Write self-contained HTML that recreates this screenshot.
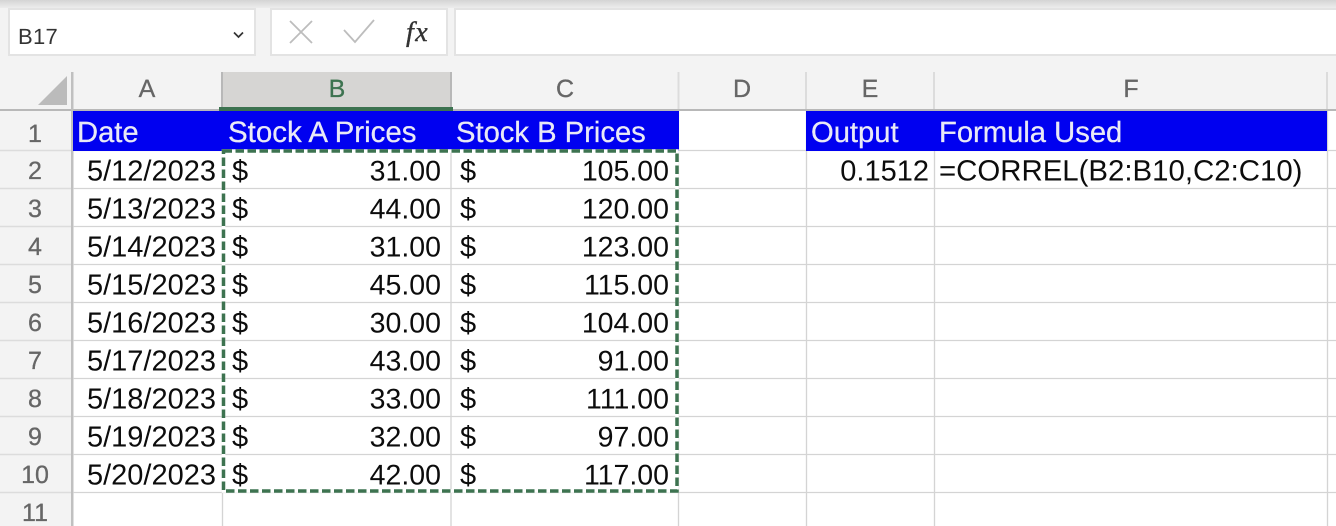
<!DOCTYPE html>
<html><head><meta charset="utf-8"><style>
html,body{margin:0;padding:0;background:#fff;width:1336px;height:526px;overflow:hidden}
svg{display:block}
text{font-family:"Liberation Sans",sans-serif;font-size:29px;fill:#0c0c0c;text-rendering:geometricPrecision}
.h{fill:#e9e9f6;font-size:29.2px;stroke:#e9e9f6;stroke-width:.25px}
.c{fill:#666;font-size:25px;text-anchor:middle;stroke:#666;stroke-width:.3px}
.r{text-anchor:end}
.n{font-size:28.5px}
</style></head><body>
<svg width="1336" height="526" viewBox="0 0 1336 526" xmlns="http://www.w3.org/2000/svg">
<defs><linearGradient id="g" x1="0" y1="0" x2="0" y2="1"><stop offset="0" stop-color="#d4d4d4"/><stop offset="1" stop-color="#ededed"/></linearGradient></defs>
<rect width="1336" height="526" fill="#fff"/>
<!-- toolbar -->
<rect width="1336" height="111" fill="#f3f3f3"/>
<rect width="1336" height="8" fill="url(#g)"/>
<rect x="9" y="9" width="246" height="46" fill="#fff" stroke="#e3e3e3" stroke-width="2"/>
<text x="18" y="44" style="font-size:22px;letter-spacing:.3px;fill:#333">B17</text>
<path d="M234 32.500l4.500 4.500 4.500-4.500" fill="none" stroke="#333" stroke-width="1.700"/>
<rect x="271" y="9" width="176" height="46" fill="#fff" stroke="#e3e3e3" stroke-width="2"/>
<path d="M290 21l22 22M312 21l-22 22" stroke="#bdbdbd" stroke-width="1.800" fill="none"/>
<path d="M344 30l11 12 19-22" stroke="#bdbdbd" stroke-width="1.800" fill="none"/>
<text x="406" y="41" style="font-family:'Liberation Serif',serif;font-style:italic;font-size:28px;letter-spacing:1.500px;fill:#333;stroke:#333;stroke-width:.4px">fx</text>
<rect x="455" y="9" width="890" height="46" fill="#fff" stroke="#e3e3e3" stroke-width="2"/>
<!-- column headers -->
<rect x="222" y="72" width="229" height="36" fill="#d6d5d3"/>
<path d="M806 72v38M934 72v38M1327 72v38M678.500 72v38" stroke="#dcdcdc" stroke-width="2" fill="none"/>
<path d="M222 72v36M451 72v36" stroke="#b8b8b8" stroke-width="2" fill="none"/>
<path d="M38 105L67 76V105Z" fill="#bbb"/>
<rect x="0" y="109" width="1336" height="2" fill="#b8b8b8"/>
<rect x="71" y="72" width="2.500" height="454" fill="#c0c0c0"/>
<rect x="219" y="107" width="234" height="4" fill="#3d7350"/>
<text class="c" x="147" y="97">A</text>
<text class="c" x="337" y="97" style="fill:#3d7350;stroke:#3d7350">B</text>
<text class="c" x="565" y="97">C</text>
<text class="c" x="742" y="97">D</text>
<text class="c" x="870" y="97">E</text>
<text class="c" x="1131" y="97">F</text>
<!-- row header -->
<rect x="0" y="111" width="71" height="415" fill="#f3f3f3"/>
<path d="M0 150.500H71M0 188.500H71M0 226.500H71M0 264.500H71M0 302.500H71M0 340.500H71M0 378.500H71M0 416.500H71M0 454.500H71M0 492.500H71" stroke="#dcdcdc" stroke-width="1.500" fill="none"/>
<text class="c" x="35" y="142">1</text><text class="c" x="35" y="179">2</text><text class="c" x="35" y="217">3</text><text class="c" x="35" y="255">4</text><text class="c" x="35" y="293">5</text><text class="c" x="35" y="331">6</text><text class="c" x="35" y="369">7</text><text class="c" x="35" y="407">8</text><text class="c" x="35" y="445">9</text><text class="c" x="35" y="483">10</text><text class="c" x="35" y="521">11</text>
<!-- grid -->
<path d="M73 150.500H1336M73 188.500H1336M73 226.500H1336M73 264.500H1336M73 302.500H1336M73 340.500H1336M73 378.500H1336M73 416.500H1336M73 454.500H1336M73 492.500H1336M222.500 111V526M451 111V526M678.500 111V526M806.500 111V526M934.500 111V526M1327.500 111V526" stroke="#d4d4d4" stroke-width="1.300" fill="none"/>
<!-- blue headers -->
<rect x="73" y="111" width="606" height="40" fill="#0000f0"/>
<rect x="806" y="111" width="521" height="40" fill="#0000f0"/>
<text class="h" x="77" y="142">Date</text>
<text class="h" x="228" y="142" style="font-size:29.5px">Stock A Prices</text>
<text class="h" x="456" y="142" style="font-size:29.2px">Stock B Prices</text>
<text class="h" x="811" y="142">Output</text>
<text class="h" x="939" y="142">Formula Used</text>
<!-- dates -->
<text class="r" x="216" y="180.500">5/12/2023</text>
<text class="r" x="216" y="218.500">5/13/2023</text>
<text class="r" x="216" y="256.500">5/14/2023</text>
<text class="r" x="216" y="294.500">5/15/2023</text>
<text class="r" x="216" y="332.500">5/16/2023</text>
<text class="r" x="216" y="370.500">5/17/2023</text>
<text class="r" x="216" y="408.500">5/18/2023</text>
<text class="r" x="216" y="446.500">5/19/2023</text>
<text class="r" x="216" y="484.500">5/20/2023</text>
<text class="r n" x="441" y="180.500">31.00</text>
<text class="r n" x="441" y="218.500">44.00</text>
<text class="r n" x="441" y="256.500">31.00</text>
<text class="r n" x="441" y="294.500">45.00</text>
<text class="r n" x="441" y="332.500">30.00</text>
<text class="r n" x="441" y="370.500">43.00</text>
<text class="r n" x="441" y="408.500">33.00</text>
<text class="r n" x="441" y="446.500">32.00</text>
<text class="r n" x="441" y="484.500">42.00</text>
<text class="r n" x="669" y="180.500">105.00</text>
<text class="r n" x="669" y="218.500">120.00</text>
<text class="r n" x="669" y="256.500">123.00</text>
<text class="r n" x="669" y="294.500">115.00</text>
<text class="r n" x="669" y="332.500">104.00</text>
<text class="r n" x="669" y="370.500">91.00</text>
<text class="r n" x="669" y="408.500">111.00</text>
<text class="r n" x="669" y="446.500">97.00</text>
<text class="r n" x="669" y="484.500">117.00</text>
<text x="232" y="180.500">$</text><text x="232" y="218.500">$</text><text x="232" y="256.500">$</text><text x="232" y="294.500">$</text><text x="232" y="332.500">$</text><text x="232" y="370.500">$</text><text x="232" y="408.500">$</text><text x="232" y="446.500">$</text><text x="232" y="484.500">$</text>
<text x="460" y="180.500">$</text><text x="460" y="218.500">$</text><text x="460" y="256.500">$</text><text x="460" y="294.500">$</text><text x="460" y="332.500">$</text><text x="460" y="370.500">$</text><text x="460" y="408.500">$</text><text x="460" y="446.500">$</text><text x="460" y="484.500">$</text>
<text class="r" x="929" y="180.500">0.1512</text>
<text x="939" y="180.500" style="font-size:29.4px">=CORREL(B2:B10,C2:C10)</text>
<!-- marching ants -->
<rect x="223.500" y="151" width="453.500" height="340" fill="none" stroke="#fff" stroke-width="3.500"/>
<rect x="223.500" y="151" width="453.500" height="340" fill="none" stroke="#3d7350" stroke-width="3.500" stroke-dasharray="8.500 3.500"/>
</svg>
</body></html>
